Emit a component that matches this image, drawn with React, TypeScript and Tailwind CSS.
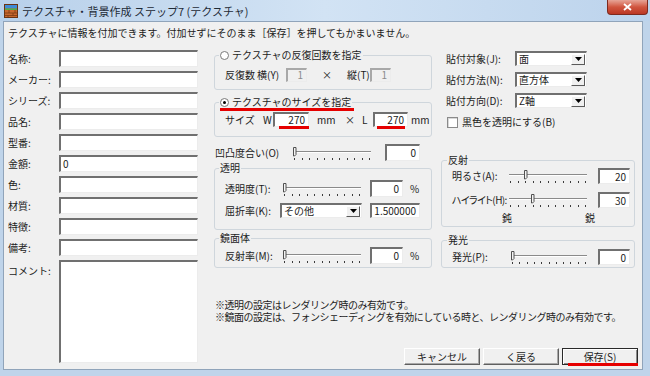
import React from "react";

type BoxProps = {
  w: string;
  h?: string;
  value?: string;
  left?: boolean;
  disabled?: boolean;
};

const Box = ({ w, h = "h-[17px]", value = "", left = false, disabled = false }: BoxProps) => (
  <div
    className={`${w} ${h} shrink-0 flex items-center leading-none ${
      left ? "justify-start pl-[2px]" : "justify-end pr-[3px]"
    } ${
      disabled
        ? "bg-[#f0f0f0] text-[#8c8c8c] border-t-[#a8a8a8] border-l-[#a8a8a8]"
        : "bg-white border-t-[#707070] border-l-[#707070]"
    } border-t-2 border-l-2 border-b border-r border-b-[#ececec] border-r-[#ececec]`}
  >
    {value}
  </div>
);

const Select = ({ w, value }: { w: string; value: string }) => (
  <div
    className={`${w} h-[15px] shrink-0 flex items-center bg-white border-t-2 border-l-2 border-t-[#707070] border-l-[#707070] border-b border-r border-b-[#ececec] border-r-[#ececec]`}
  >
    <span className="flex-1 pl-[2px] leading-[12px] whitespace-nowrap">{value}</span>
    <span className="w-[14px] h-[11px] mr-[1px] bg-[#f0f0f0] border border-t-white border-l-white border-b-[#5a5a5a] border-r-[#5a5a5a] flex items-center justify-center">
      <svg width="7" height="4" viewBox="0 0 7 4">
        <path d="M0 0h7L3.5 4z" fill="#000" />
      </svg>
    </span>
  </div>
);

const Slider = ({ width, value = 0 }: { width: number; value?: number }) => {
  const tx = Math.round(2 + value * (width - 6)) + 0.5;
  const ticks = Array.from({ length: 11 }, (_, i) => Math.round(2 + (i * (width - 5)) / 10));
  return (
    <svg width={width} height={16} className="shrink-0">
      <line x1={1} y1={6.5} x2={width - 1} y2={6.5} stroke="#8a8a8a" />
      <line x1={1} y1={7.5} x2={width - 1} y2={7.5} stroke="#ffffff" />
      {ticks.map((x) => (
        <rect key={x} x={x} y={13} width={1} height={2} fill="#3c3c3c" />
      ))}
      <path d={`M${tx - 1} 2.5h2.5v7l-1.5 1.5h-1z`} fill="#f4f4f4" stroke="#505050" />
    </svg>
  );
};

const Radio = ({ checked }: { checked: boolean }) => (
  <span className="w-[9px] h-[9px] rounded-full bg-white border border-[#7a7a7a] flex items-center justify-center shrink-0">
    {checked && <span className="w-[3px] h-[3px] rounded-full bg-black" />}
  </span>
);

const RedLine = ({ className }: { className: string }) => (
  <span className={`absolute h-[3px] bg-[#e60000] ${className}`} />
);

const leftRows = ["名称:", "メーカー:", "シリーズ:", "品名:", "型番:", "金額:", "色:", "材質:", "特徴:", "備考:"];

const TitleIcon = () => (
  <svg width="14" height="14" viewBox="0 0 14 14" className="shrink-0">
    <rect x="0.5" y="0.5" width="13" height="13" fill="#c8662c" stroke="#6a3312" />
    <rect x="1" y="1" width="12" height="3.5" fill="#3f8ad6" />
    <rect x="1" y="4.5" width="12" height="1.5" fill="#4fae4a" />
    <path d="M1 9h12M1 11.5h12M5 6v3M9 9v2.5M4 11.5V13M11 6v3" stroke="#7a3a14" strokeWidth="0.8" />
  </svg>
);

export default function App() {
  return (
    <div className="w-[650px] h-[376px] overflow-hidden bg-[#bfd4ea] flex flex-col font-['Noto_Sans_CJK_JP','Noto_Sans',sans-serif] text-[10px] leading-[12px] text-[#1c1c1c]">
      {/* title bar */}
      <div className="h-[21px] shrink-0 flex bg-gradient-to-r from-[#b8d0ea] via-[#d2e3f4] to-[#bcd3ec]">
        <div className="flex items-center pl-[4px] gap-[4px] h-[21px]">
          <TitleIcon />
          <span className="text-[11px] text-[#1e2a36]">テクスチャ・背景作成 ステップ7 (テクスチャ)</span>
        </div>
        <div className="ml-auto mr-[2px] w-[41px] h-[15px] rounded-b-[4px] border border-t-0 border-[#7d2a1f] bg-gradient-to-b from-[#e6a497] via-[#d0553f] to-[#bb3724] flex items-center justify-center">
          <svg width="9" height="8" viewBox="0 0 9 8">
            <path d="M1 1l7 6M8 1L1 7" stroke="#fff" strokeWidth="1.8" />
          </svg>
        </div>
      </div>

      {/* client area */}
      <div className="flex-1 ml-[3px] mr-[7px] mb-[6px] bg-[#f0f0f0] border border-[#90a4ba] flex flex-col pl-[4px] pt-[5px]">
        <div className="h-[12px] whitespace-nowrap">
          テクスチャに情報を付加できます。付加せずにそのまま［保存］を押してもかまいません。
        </div>

        <div className="flex mt-[10px]">
          {/* left column */}
          <div className="w-[190px] pt-[1px] flex flex-col gap-[4px]">
            {leftRows.map((label) => (
              <div key={label} className="h-[17px] flex items-center">
                <span className="w-[51px] whitespace-nowrap">{label}</span>
                <Box w="flex-1" value={label === "金額:" ? "0" : ""} left />
              </div>
            ))}
            <div className="flex">
              <span className="w-[51px] pt-[5px] whitespace-nowrap">コメント:</span>
              <div className="flex-1 h-[103px] bg-white border-t-2 border-l-2 border-t-[#707070] border-l-[#707070] border-b border-r border-b-[#ececec] border-r-[#ececec]" />
            </div>
          </div>

          {/* right area */}
          <div className="ml-[16px] flex-1 flex flex-col">
            <div className="flex">
              {/* middle column */}
              <div className="w-[218px] flex flex-col">
                <fieldset className="border border-[#cfd6dc] rounded-[3px] pb-[7px]">
                  <legend className="ml-[4px] px-[1px] h-[12px] flex items-center gap-[3px]">
                    <Radio checked={false} />
                    <span>テクスチャの反復回数を指定</span>
                  </legend>
                  <div className="mt-[6px] h-[15px] pl-[10px] flex items-center whitespace-nowrap">
                    <span className="w-[32px]">反復数</span>
                    <span className="w-[29px]">横(Y)</span>
                    <Box w="w-[21px]" h="h-[14px]" value="1" disabled />
                    <span className="w-[40px] text-center">×</span>
                    <span className="w-[23px]">縦(T)</span>
                    <Box w="w-[21px]" h="h-[14px]" value="1" disabled />
                  </div>
                </fieldset>

                <fieldset className="mt-[6px] border border-[#cfd6dc] rounded-[3px] pb-[9px]">
                  <legend className="relative ml-[4px] px-[1px] h-[12px] flex items-center gap-[3px]">
                    <Radio checked />
                    <span>テクスチャのサイズを指定</span>
                    <RedLine className="left-[1px] w-[134px] bottom-[-3px]" />
                  </legend>
                  <div className="mt-[4px] h-[15px] pl-[10px] flex items-center whitespace-nowrap">
                    <span className="w-[38px]">サイズ</span>
                    <span className="w-[10px]">W</span>
                    <div className="relative">
                      <Box w="w-[36px]" h="h-[15px]" value="270" />
                      <RedLine className="left-[6px] right-0 bottom-[-2px]" />
                    </div>
                    <span className="ml-[8px] w-[28px]">mm</span>
                    <span className="w-[17px]">×</span>
                    <span className="w-[11px]">L</span>
                    <div className="relative">
                      <Box w="w-[35px]" h="h-[15px]" value="270" />
                      <RedLine className="left-[4px] right-[3px] bottom-[-2px]" />
                    </div>
                    <span className="ml-[3px]">mm</span>
                  </div>
                </fieldset>

                <div className="mt-[7px] h-[17px] flex items-center whitespace-nowrap">
                  <span className="w-[78px] pl-[1px]">凹凸度合い(O)</span>
                  <Slider width={80} />
                  <div className="ml-[13px]">
                    <Box w="w-[35px]" value="0" />
                  </div>
                </div>

                <fieldset className="mt-[1px] border border-[#cfd6dc] rounded-[3px] pb-[10px]">
                  <legend className="ml-[4px] px-[1px] h-[12px]">透明</legend>
                  <div className="mt-[6px] h-[17px] pl-[10px] flex items-center whitespace-nowrap">
                    <span className="w-[57px]">透明度(T):</span>
                    <Slider width={80} />
                    <div className="ml-[8px]">
                      <Box w="w-[33px]" value="0" />
                    </div>
                    <span className="ml-[7px]">%</span>
                  </div>
                  <div className="mt-[5px] h-[17px] pl-[10px] flex items-center whitespace-nowrap">
                    <span className="w-[55px]">屈折率(K):</span>
                    <Select w="w-[82px]" value="その他" />
                    <div className="ml-[8px]">
                      <Box w="w-[50px]" h="h-[15px]" value="1.500000" />
                    </div>
                  </div>
                </fieldset>

                <fieldset className="mt-[2px] border border-[#cfd6dc] rounded-[3px] pb-[3px]">
                  <legend className="ml-[4px] px-[1px] h-[12px]">鏡面体</legend>
                  <div className="mt-[3px] h-[17px] pl-[10px] flex items-center whitespace-nowrap">
                    <span className="w-[57px]">反射率(M):</span>
                    <Slider width={80} />
                    <div className="ml-[8px]">
                      <Box w="w-[33px]" value="0" />
                    </div>
                    <span className="ml-[7px]">%</span>
                  </div>
                </fieldset>
              </div>

              {/* right column */}
              <div className="ml-[9px] w-[194px] flex flex-col">
                <div className="mt-[2px] pl-[5px] flex flex-col gap-[6px]">
                  {[
                    ["貼付対象(J):", "面"],
                    ["貼付方法(N):", "直方体"],
                    ["貼付方向(D):", "Z軸"],
                  ].map(([label, value]) => (
                    <div key={label} className="h-[15px] flex items-center whitespace-nowrap">
                      <span className="w-[69px]">{label}</span>
                      <Select w="w-[72px]" value={value} />
                    </div>
                  ))}
                </div>
                <div className="mt-[8px] h-[12px] pl-[6px] flex items-center gap-[4px]">
                  <span className="w-[11px] h-[11px] bg-white border border-[#8a8a8a] shadow-[inset_1px_1px_0_#d8d8d8]" />
                  <span>黒色を透明にする(B)</span>
                </div>

                <fieldset className="mt-[26px] border border-[#cfd6dc] rounded-[3px] pb-[2px]">
                  <legend className="ml-[5px] px-[1px] h-[12px]">反射</legend>
                  <div className="mt-[2px] h-[16px] pl-[10px] flex items-center whitespace-nowrap">
                    <span className="w-[56px]">明るさ(A):</span>
                    <Slider width={80} value={0.2} />
                    <div className="ml-[10px]">
                      <Box w="w-[32px]" h="h-[16px]" value="20" />
                    </div>
                  </div>
                  <div className="mt-[8px] h-[16px] pl-[10px] flex items-center whitespace-nowrap">
                    <span className="w-[56px] [font-feature-settings:'palt'] tracking-[-0.6px]">ハイライト(H):</span>
                    <Slider width={80} value={0.3} />
                    <div className="ml-[10px]">
                      <Box w="w-[32px]" h="h-[16px]" value="30" />
                    </div>
                  </div>
                  <div className="mt-[4px] h-[12px] pl-[60px] flex">
                    <span className="w-[83px]">鈍</span>
                    <span>鋭</span>
                  </div>
                </fieldset>

                <fieldset className="mt-[7px] border border-[#cfd6dc] rounded-[3px] pb-[2px]">
                  <legend className="ml-[5px] px-[1px] h-[12px]">発光</legend>
                  <div className="mt-[3px] h-[16px] pl-[10px] flex items-center whitespace-nowrap">
                    <span className="w-[58px]">発光(P):</span>
                    <Slider width={78} />
                    <div className="ml-[10px]">
                      <Box w="w-[32px]" h="h-[16px]" value="0" />
                    </div>
                  </div>
                </fieldset>
              </div>
            </div>

            <div className="mt-[31px] pl-[1px] leading-[12px] tracking-[-0.5px] whitespace-nowrap">
              <div>※透明の設定はレンダリング時のみ有効です。</div>
              <div>※鏡面の設定は、フォンシェーディングを有効にしている時と、レンダリング時のみ有効です。</div>
            </div>

            <div className="mt-[25px] mr-[4px] flex justify-end gap-[3px]">
              <button className="w-[76px] h-[17px] bg-[#f0f0f0] border border-t-white border-l-white border-b-[#5f5f5f] border-r-[#5f5f5f] shadow-[inset_-1px_-1px_0_#a8a8a8] leading-none">
                キャンセル
              </button>
              <button className="w-[76px] h-[17px] bg-[#f0f0f0] border border-t-white border-l-white border-b-[#5f5f5f] border-r-[#5f5f5f] shadow-[inset_-1px_-1px_0_#a8a8a8] leading-none">
                く戻る
              </button>
              <button className="relative w-[76px] h-[17px] bg-[#f0f0f0] border border-[#2a2a2a] shadow-[inset_1px_1px_0_#ffffff,inset_-1px_-1px_0_#8a8a8a] leading-none">
                保存(S)
                <RedLine className="left-[5px] right-[-1px] bottom-[-2px]" />
              </button>
            </div>
          </div>
        </div>
      </div>
    </div>
  );
}
